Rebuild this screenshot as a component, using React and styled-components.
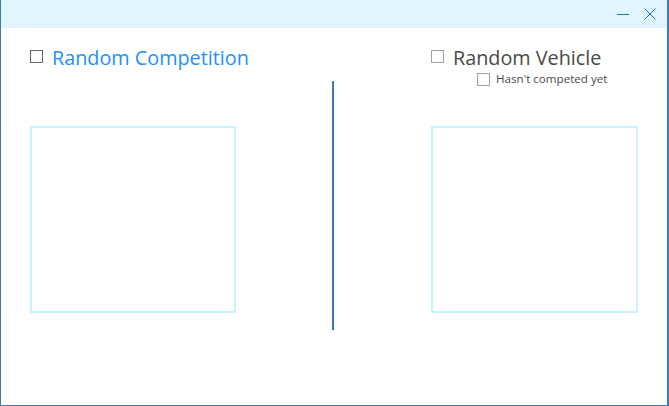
import styled, { createGlobalStyle } from "styled-components";

const Global = createGlobalStyle`
  html, body {
    margin: 0;
    padding: 0;
    background: #ffffff;
  }
  * {
    box-sizing: border-box;
  }
`;

const Window = styled.div`
  width: 669px;
  height: 406px;
  border-left: 1px solid #3f7cb3;
  border-right: 2px solid #3f7cb3;
  border-bottom: 1px solid #3f7cb3;
  display: flex;
  flex-direction: column;
  background: #ffffff;
  font-family: "Open Sans", "Noto Sans", sans-serif;
`;

const TitleBar = styled.div`
  height: 28px;
  background: #e1f5fe;
  display: flex;
  justify-content: flex-end;
  align-items: center;
  padding-right: 11px;
  gap: 15px;
`;

const TitleButton = styled.div`
  width: 12px;
  height: 12px;
  display: flex;
  align-items: center;
  justify-content: center;
`;

const Body = styled.div`
  flex: 1;
  display: flex;
  align-items: flex-start;
`;

const Panel = styled.div`
  width: ${(p) => p.$width || "auto"};
  flex: ${(p) => (p.$width ? "none" : 1)};
  padding-top: 16px;
  padding-left: ${(p) => p.$indent}px;
`;

const HeaderArea = styled.div`
  height: 82px;
  display: flex;
  flex-direction: column;
`;

const Row = styled.label`
  display: flex;
  align-items: center;
  height: ${(p) => (p.$small ? 16 : 25)}px;
  gap: ${(p) => (p.$small ? 6 : 9)}px;
  margin-left: ${(p) => p.$indent || 0}px;
  margin-top: ${(p) => p.$gap || 0}px;
`;

const Check = styled.span`
  width: 13px;
  height: 13px;
  border: 1px solid ${(p) => p.$color};
  background: #ffffff;
  flex: none;
`;

const Title = styled.span`
  font-size: 19.8px;
  color: ${(p) => p.$color};
  white-space: nowrap;
  line-height: 1;
  padding-top: 2px;
`;

const SubTitle = styled.span`
  font-size: 11.6px;
  color: #4b4b4b;
  white-space: nowrap;
  line-height: 1;
`;

const ImageBox = styled.div`
  width: ${(p) => p.$w}px;
  height: 187px;
  border: 2px solid #c6f3fd;
`;

const Divider = styled.div`
  width: 2px;
  height: 249px;
  margin-top: 53px;
  background: #3a78b3;
  flex: none;
`;

export default function App() {
  return (
    <>
      <Global />
      <Window>
        <TitleBar>
          <TitleButton>
            <svg width="12" height="12" viewBox="0 0 12 12">
              <line x1="0" y1="6.5" x2="12" y2="6.5" stroke="#1a73e0" strokeWidth="1" />
            </svg>
          </TitleButton>
          <TitleButton>
            <svg width="12" height="12" viewBox="0 0 12 12">
              <path d="M0.5 0.5 L11.5 11.5 M11.5 0.5 L0.5 11.5" stroke="#1a73e0" strokeWidth="1" fill="none" />
            </svg>
          </TitleButton>
        </TitleBar>
        <Body>
          <Panel $width="331px" $indent={29}>
            <HeaderArea>
              <Row>
                <Check $color="#666666" />
                <Title $color="#1e90ff">Random Competition</Title>
              </Row>
            </HeaderArea>
            <ImageBox $w={206} />
          </Panel>
          <Divider />
          <Panel $indent={97}>
            <HeaderArea>
              <Row>
                <Check $color="#a0a0a0" />
                <Title $color="#4a4a4a">Random Vehicle</Title>
              </Row>
              <Row $small $indent={46} $gap={2}>
                <Check $color="#a0a0a0" />
                <SubTitle>Hasn't competed yet</SubTitle>
              </Row>
            </HeaderArea>
            <ImageBox $w={207} />
          </Panel>
        </Body>
      </Window>
    </>
  );
}
